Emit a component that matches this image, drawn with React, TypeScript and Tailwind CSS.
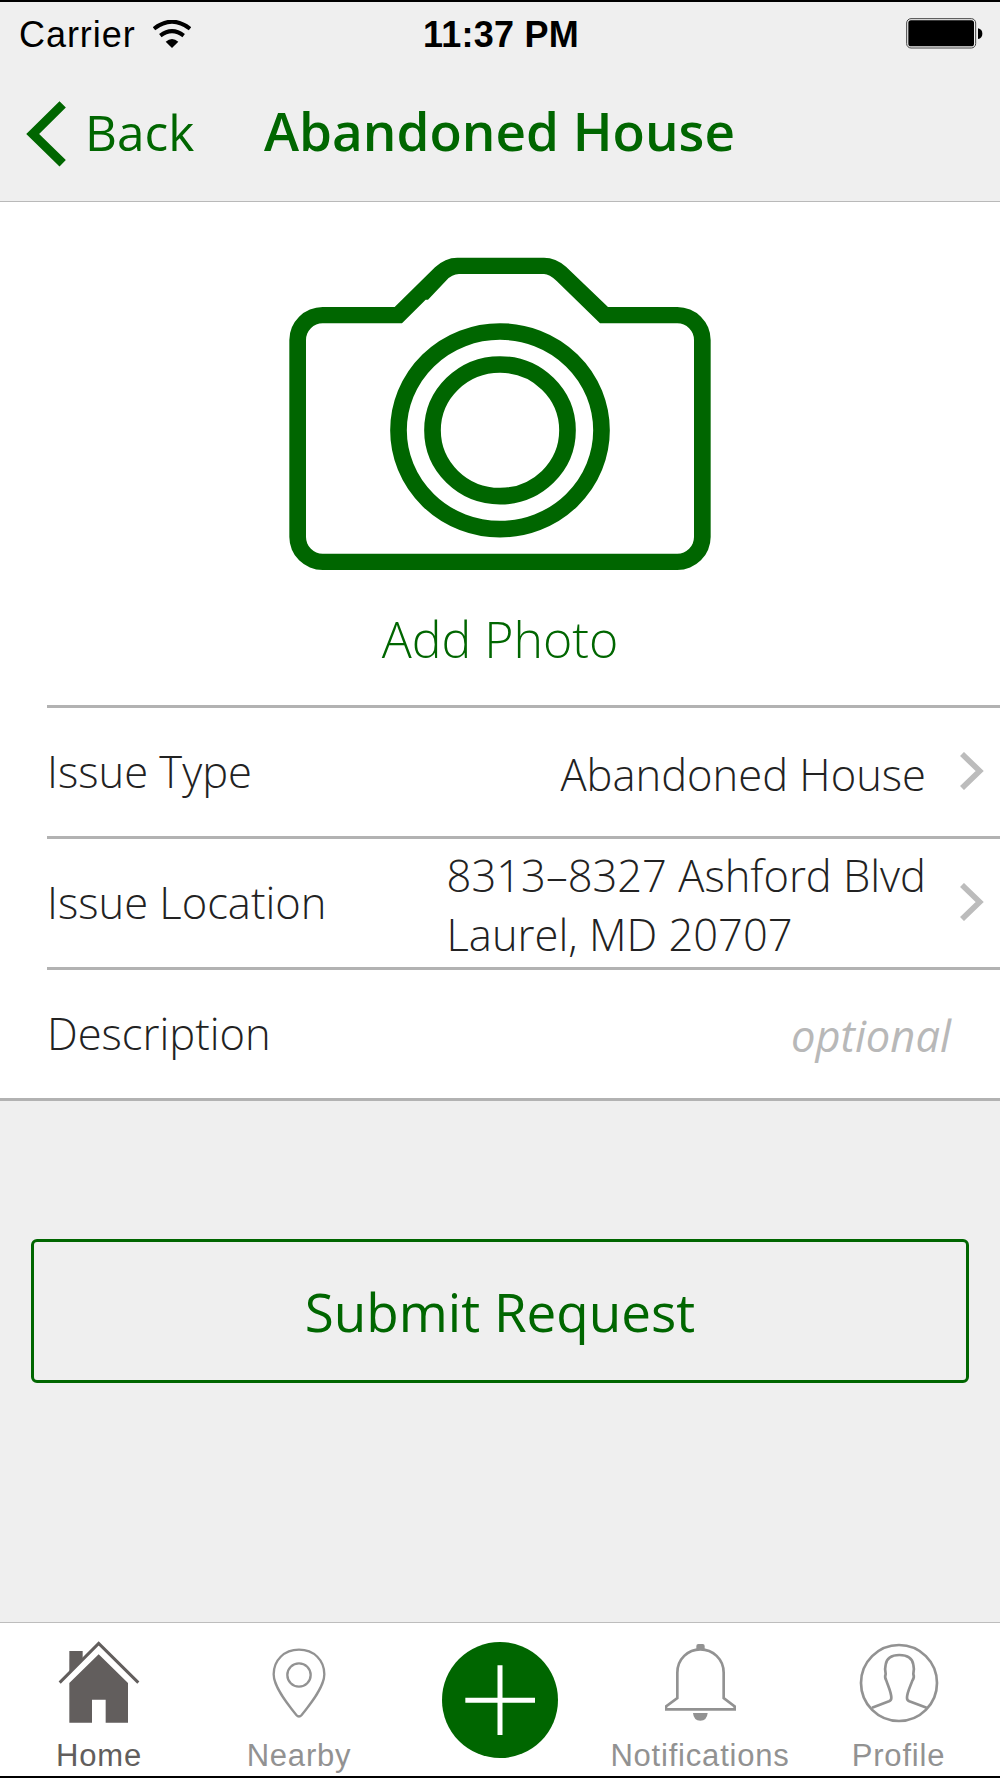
import React from 'react';

interface RowProps {
  label: string;
  children: React.ReactNode;
  chevron?: boolean;
}

interface TabProps {
  label: string;
  active?: boolean;
  className?: string;
  children: React.ReactNode;
}

const WifiIcon = () => (
  <svg className="w-[38px] h-[28px] mb-0.5" viewBox="460 54 114 84" fill="none" stroke="#000">
    <path d="M463 80 Q517 38 571 80" strokeWidth="12" />
    <path d="M482 101 Q517 74 552 101" strokeWidth="12" />
    <path d="M498 119 Q517 103 536 119 L517 138 Z" fill="#000" stroke="none" />
  </svg>
);

const BatteryIcon = () => (
  <svg className="w-[77px] h-[31px] mb-0.5" viewBox="1218 54 231 93">
    <rect x="1220" y="56" width="207" height="88" rx="13" fill="none" stroke="#444" strokeWidth="3" />
    <rect x="1225" y="61" width="197" height="78" rx="8" fill="#000" />
    <path d="M1434 85 Q1447 88 1447 101 Q1447 114 1434 117 Z" fill="#000" />
  </svg>
);

const CameraIcon = () => (
  <svg className="w-[422px] h-[313px]" viewBox="57 51 1266 939" fill="#060">
    <path
      fillRule="evenodd"
      d="M58 300 A100 99 0 0 1 158 201 H374 L495 82 Q525 53 562 53 H822 Q857 53 888 80 L1014 201 H1222 A100 99 0 0 1 1322 300 V891 A100 99 0 0 1 1222 990 H158 A100 99 0 0 1 58 891 Z
         M108 300 V891 A50 50 0 0 0 158 941 H1222 A50 50 0 0 0 1272 891 V300 A50 50 0 0 0 1222 250 H990 L860 123 Q838 102 822 102 H567 Q546 102 528 122 L474 179 H467 L396 250 H158 A50 50 0 0 0 108 300 Z"
    />
    <ellipse cx="690" cy="571" rx="304.5" ry="296.5" fill="none" stroke="#060" strokeWidth="50" />
    <ellipse cx="690" cy="571" rx="202.5" ry="197.5" fill="none" stroke="#060" strokeWidth="50" />
  </svg>
);

const HomeIcon = () => (
  <svg className="w-[82px] h-[82px]" viewBox="176 94 246 246" fill="#625e5d">
    <path d="M210 124 H250 V146 L210 186 Z" />
    <path d="M181 219 L298 101 L417 219" fill="none" stroke="#625e5d" strokeWidth="9" />
    <path d="M298 134 L386 220 V339 H319 V270 H278 V339 H210 V220 Z" />
  </svg>
);

const PinIcon = () => (
  <svg className="w-[54px] h-[70px]" viewBox="816 113 162 210" fill="none" stroke="#929292" strokeWidth="7">
    <path d="M897 118 C852 118 821 150 821 192 C821 228 858 276 889 314 Q897 323 905 314 C936 276 973 228 973 192 C973 150 942 118 897 118 Z" />
    <circle cx="897" cy="194" r="35" />
  </svg>
);

const PlusIcon = () => (
  <svg className="w-[116px] h-[116px]" viewBox="126 95 348 348">
    <circle cx="300" cy="269" r="174" fill="#060" />
    <path d="M300 165 V374 M196 269.500 H405" stroke="#fff" strokeWidth="15" />
  </svg>
);

const BellIcon = () => (
  <svg className="w-[71px] h-[78px]" viewBox="796 98 213 234" fill="none" stroke="#929292" strokeWidth="6">
    <path d="M833 263 V187 C833 146 865 117 902 117 C939 117 972 146 972 187 V263 L1005 288 V297 H799 V288 Z" strokeWidth="8" />
    <path d="M890 116 V107 Q890 101 896 101 H909 Q915 101 915 107 V116 Z" fill="#929292" stroke="none" />
    <path d="M880 308 H924 Q922 331 902 331 Q882 331 880 308 Z" fill="#929292" stroke="none" />
  </svg>
);

const ProfileIcon = () => (
  <svg className="w-[80px] h-[80px]" viewBox="237 98 240 240" fill="none" stroke="#929292" strokeWidth="8">
    <circle cx="357" cy="218" r="114" />
    <path d="M276 292 L327 273 Q334 270 334 263 C334 246 325 229 319 211 C315 204 314 198 317 191 C315 180 315 170 317 163 C320 143 336 134 358 134 C380 134 397 143 400 163 C402 170 402 180 400 191 C403 198 402 204 397 211 C391 229 381 246 381 263 Q381 270 388 273 L440 292" />
  </svg>
);

const Row: React.FC<RowProps> = ({ label, children, chevron }) => (
  <div className="h-[131px] flex items-center justify-between border-t-[3px] border-[#b2b2b2] pb-[3px] text-[#222]">
    <span className="pt-0.5">{label}</span>
    <div className="flex items-center">
      {children}
      {chevron && (
        <svg className="w-6 h-[38px] ml-[34px] mr-4" viewBox="1382 184 72 114" fill="none" stroke="#bcbcbc" strokeWidth="17">
          <path d="M1388 190 L1441 241 L1388 292" />
        </svg>
      )}
    </div>
  </div>
);

const Tab: React.FC<TabProps> = ({ label, active, className = '', children }) => (
  <div className={`flex flex-col items-center ${active ? 'text-[#625e5d]' : 'text-[#929292]'} ${className}`}>
    <div className="h-[115px] flex items-start">{children}</div>
    <span className="text-[31px] leading-9 tracking-[0.8px] whitespace-nowrap">{label}</span>
  </div>
);

export default function App() {
  return (
    <div className="w-[1000px] h-[1778px] flex flex-col bg-[#efefef] border-y-2 border-black font-['Open_Sans',sans-serif]">
      <header className="border-b border-[#b9b9b9] text-[#060]">
        <div className="h-[65px] grid grid-cols-3 items-center pl-[19px] pr-[17px] text-black text-[36px] font-['Liberation_Sans',Arial,sans-serif]">
          <div className="flex items-center gap-[17px]">
            <span className="tracking-[0.95px]">Carrier</span>
            <WifiIcon />
          </div>
          <span className="text-center font-bold tracking-[0.25px] whitespace-nowrap">11:37 PM</span>
          <div className="flex justify-end">
            <BatteryIcon />
          </div>
        </div>
        <div className="h-[134px] flex items-center pl-[26px] pb-1">
          <svg className="w-10 h-[66px] mt-[3px]" viewBox="78 301 120 198" fill="none" stroke="#060" strokeWidth="27">
            <path d="M188 311 L98 400 L188 488" />
          </svg>
          <span className="ml-[19px] w-[179px] text-[49.5px]">Back</span>
          <h1 className="pb-0.5 text-[53px] font-semibold whitespace-nowrap">Abandoned House</h1>
        </div>
      </header>

      <main className="flex-1">
        <section className="bg-white border-b-[3px] border-[#b2b2b2]">
          <div className="h-[503px] flex flex-col items-center pt-[55px] text-[#060]">
            <CameraIcon />
            <span className="mt-[35px] text-[50px] leading-[68px] font-light">Add Photo</span>
          </div>
          <div className="ml-[47px] text-[43.5px] leading-[59px] font-light">
            <Row label="Issue Type" chevron>
              <span className="mt-[7px]">Abandoned House</span>
            </Row>
            <Row label="Issue Location" chevron>
              <span className="mt-[7px]">
                8313–8327 Ashford Blvd
                <br />
                Laurel, MD 20707
              </span>
            </Row>
            <Row label="Description">
              <span className="mt-[6px] mr-[49px] italic font-normal text-[#b8b8b8]">optional</span>
            </Row>
          </div>
        </section>
        <div className="px-[31px] pt-[138px]">
          <button className="w-full h-[144px] pt-0.5 border-[3px] border-[#060] rounded-md text-[53px] text-[#060]">
            Submit Request
          </button>
        </div>
      </main>

      <nav className="h-[154px] shrink-0 grid grid-cols-5 bg-white border-t border-[#bdbdbd] font-['Liberation_Sans',Arial,sans-serif]">
        <Tab label="Home" active className="pr-0.5">
          <div className="pt-[18px]"><HomeIcon /></div>
        </Tab>
        <Tab label="Nearby" className="pr-0.5">
          <div className="pt-[25px]"><PinIcon /></div>
        </Tab>
        <div className="flex justify-center pt-[19px]">
          <PlusIcon />
        </div>
        <Tab label="Notifications">
          <div className="pt-5"><BellIcon /></div>
        </Tab>
        <Tab label="Profile" className="pr-[3px]">
          <div className="pt-5"><ProfileIcon /></div>
        </Tab>
      </nav>
    </div>
  );
}
